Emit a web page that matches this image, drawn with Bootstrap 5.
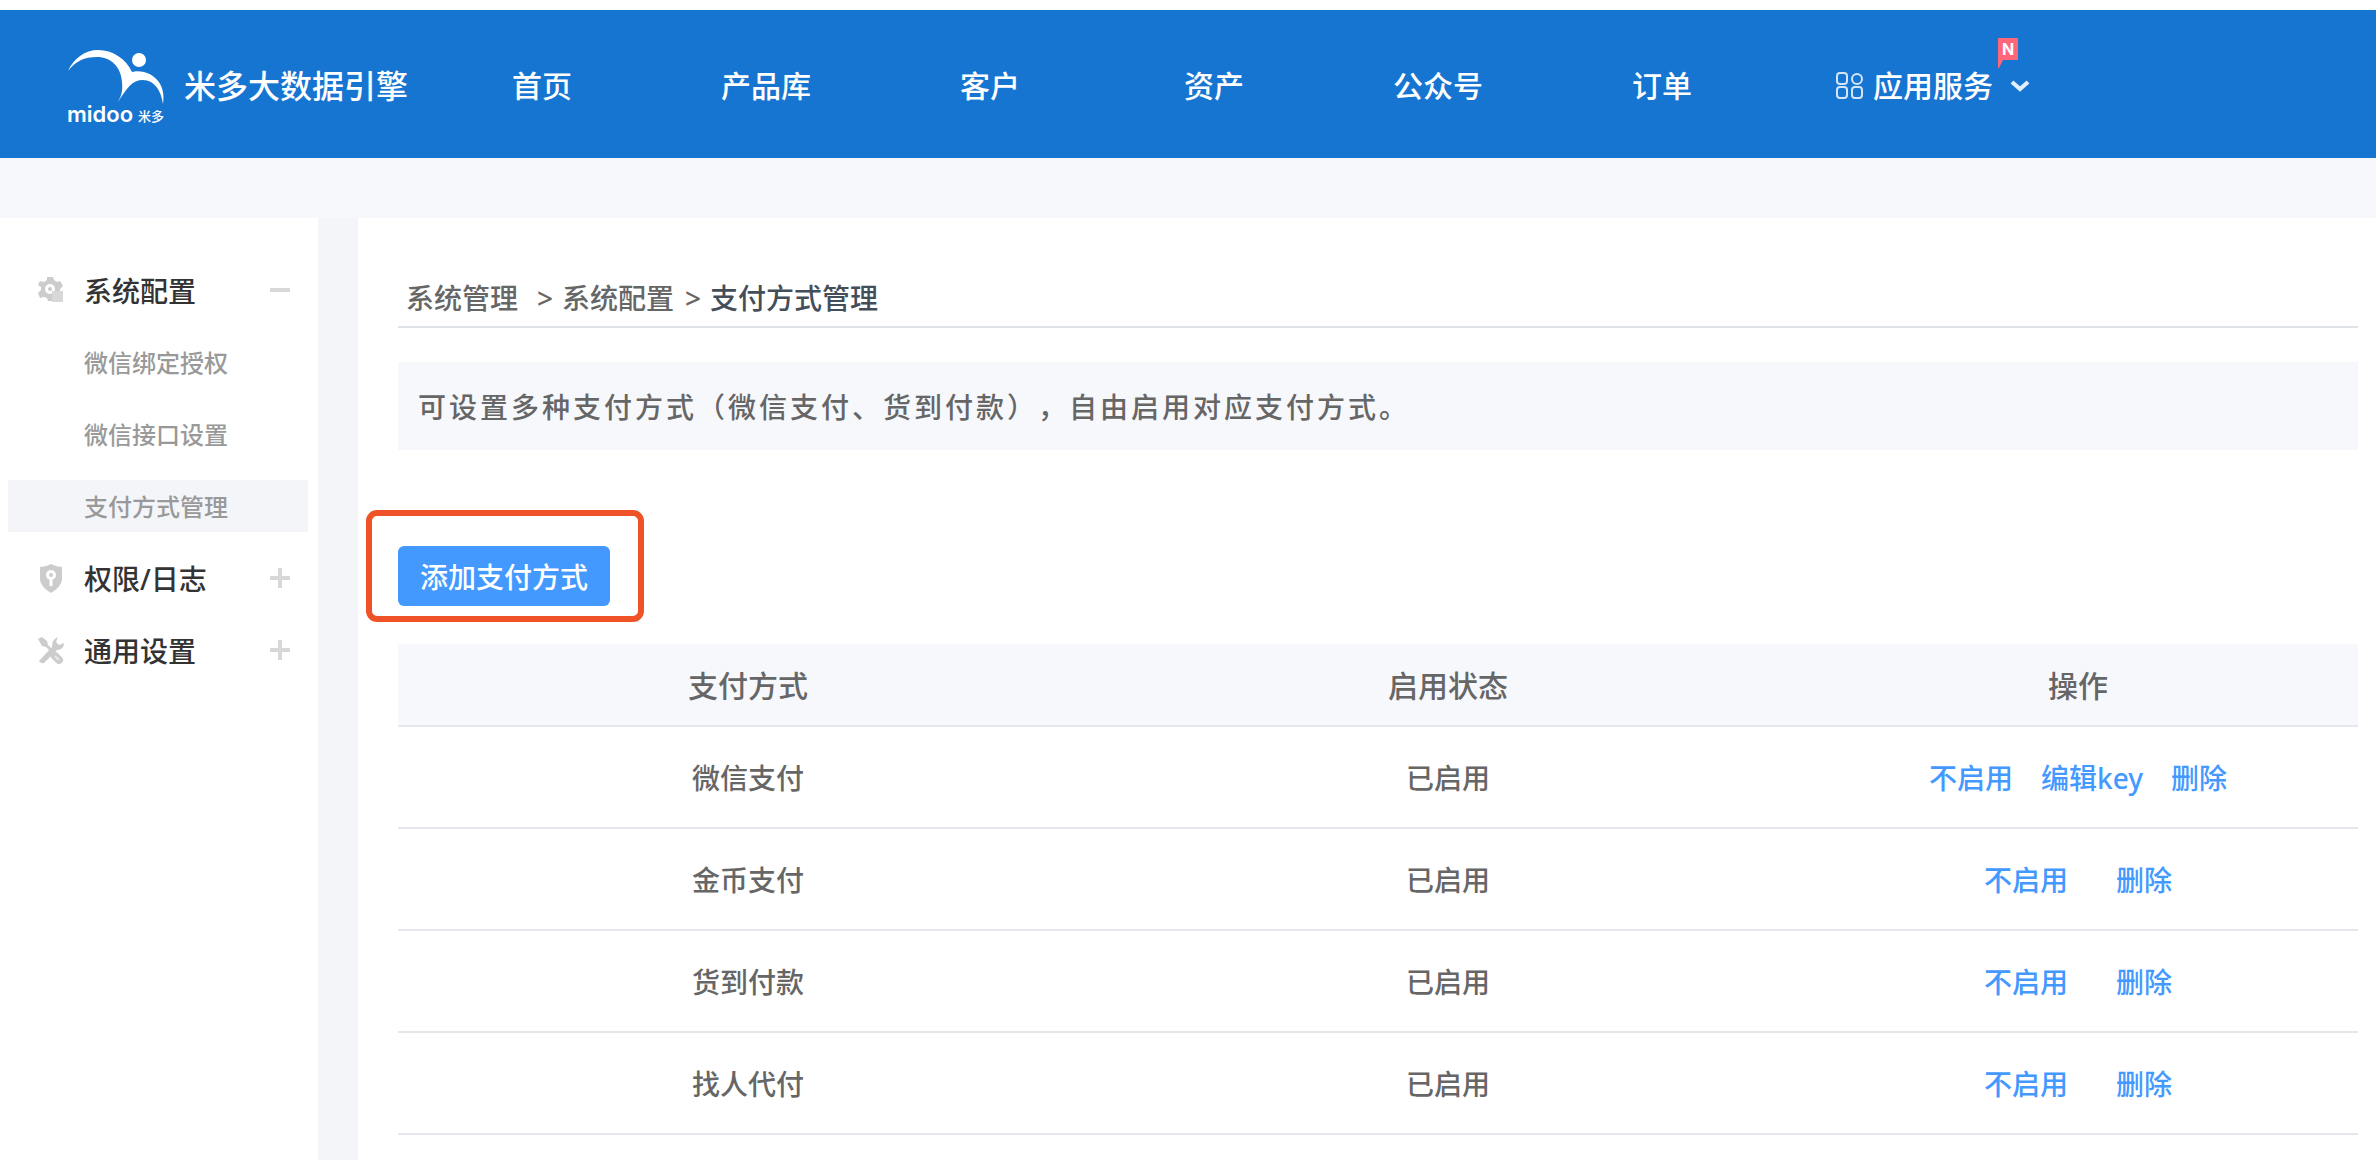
<!DOCTYPE html>
<html lang="zh-CN">
<head>
<meta charset="utf-8">
<meta name="viewport" content="width=device-width, initial-scale=1">
<title>支付方式管理</title>
<link href="https://cdn.jsdelivr.net/npm/bootstrap@5.3.0/dist/css/bootstrap.min.css" rel="stylesheet">
<style>
  body { font-family: "Noto Sans", "Noto Sans CJK SC", sans-serif; font-size: 28px; font-weight: 500; line-height: 40px; color: #666; background: #f6f8fc; }
  a { text-decoration: none; }
  .topbar { background: #1775d2; border-top: 10px solid #fff; height: 158px; }
  .brand-box { width: 430px; padding-left: 66px; gap: 18px; color: #fff; font-size: 32px; }
  .brand-box span { padding-top: 4px; }
  .brand-box svg text { font-family: Inter, "Noto Sans CJK SC", sans-serif; }
  .main-nav .nav-link { width: 224px; padding: 4px 0 0; text-align: center; color: #fff; font-size: 30px; line-height: 40px; }
  .main-nav .nav-link.services { width: auto; padding-left: 62px; gap: 9px; }
  .new-flag { position: absolute; left: 100%; top: -28px; margin-left: 5px; }
  .new-flag text { font-family: Inter, sans-serif; font-size: 16px; font-weight: 700; }
  .page-body { margin-top: 60px; }
  .side-panel { width: 318px; padding: 46px 10px 0 8px; gap: 20px; }
  .side-panel a { height: 52px; padding: 2px 18px 0 76px; color: #999; font-size: 24px; }
  .side-panel a.group-head { padding-left: 30px; color: #333; font-size: 28px; }
  .side-panel a.current { background: #f3f5f9; }
  .side-panel .group-icon { width: 26px; height: 30px; margin-right: 20px; }
  .side-panel .fold-icon { width: 20px; height: 20px; margin: 0 0 2px auto; }
  .gutter-strip { width: 40px; background: #f3f5f9; }
  .content-panel { padding: 60px 18px 0 40px; }
  .crumbs { padding: 0 8px 8px; border-bottom: 2px solid #dfe3e8; }
  .crumbs a { color: #666; }
  .crumbs .sep { margin: 0 9px 0 11px; }
  .crumbs .sep.first { margin-left: 19px; }
  .crumbs .here { color: #444e59; }
  .notice { margin-top: 34px; padding: 25px 20px 23px; background: #f6f8fc; letter-spacing: 3px; text-spacing-trim: space-all; }
  .toolbar-row { margin-top: 60px; }
  .highlight { margin-left: -32px; padding: 30px 28px 10px 26px; border: 6px solid #f05228; border-radius: 11px; }
  .btn-add { --bs-btn-color: #fff; --bs-btn-bg: #4499ff; --bs-btn-hover-color: #fff; --bs-btn-hover-bg: #2e8bf7; --bs-btn-font-weight: 500; height: 60px; padding: 2px 22px 0; border: 0; border-radius: 6px; font-size: 28px; line-height: 40px; }
  .pay-table { table-layout: fixed; margin-top: 22px; --bs-table-bg: transparent; color: #666; text-align: center; vertical-align: middle; }
  .pay-table th, .pay-table td { padding: 2px 0 0; border-bottom: 2px solid #e6e7ec; color: #666; vertical-align: middle; }
  .pay-table th { height: 82px; background: #f6f8fc; font-size: 30px; font-weight: 500; }
  .pay-table td { height: 102px; }
  .pay-table .wide-col { width: calc(100% * 5 / 14); }
  .pay-table a { color: #4499ff; }
  .acts { gap: 28px; }
  .acts.two { gap: 48px; }
</style>
<script src="https://cdn.jsdelivr.net/npm/bootstrap@5.3.0/dist/js/bootstrap.bundle.min.js"></script>
</head>
<body>
<header class="topbar d-flex align-items-center">
  <a class="brand-box d-flex align-items-center flex-shrink-0" href="#">
    <svg width="100" height="88" viewBox="-2 -10 100 88" fill="#fff" aria-label="midoo">
      <path d="M0 21C6 8 17 0 30 0c15 0 28 9 34 22 3-1 8-1 12 0 12 3 22 14 19 32-2-14-9-24-20-24-11 0-16 8-25 22 3-6 5-10 4-20C53 17 43 7 29 7 16 7 8 11 0 21z"/>
      <circle cx="71" cy="10" r="7"/>
      <text x="-1" y="72" font-size="22" font-weight="600">midoo</text>
      <text x="70" y="71" font-size="13">米多</text>
    </svg>
    <span>米多大数据引擎</span>
  </a>
  <nav class="main-nav nav flex-nowrap align-items-center">
    <a class="nav-link" href="#">首页</a>
    <a class="nav-link" href="#">产品库</a>
    <a class="nav-link" href="#">客户</a>
    <a class="nav-link" href="#">资产</a>
    <a class="nav-link" href="#">公众号</a>
    <a class="nav-link" href="#">订单</a>
    <a class="nav-link services d-flex align-items-center" href="#">
      <svg width="28" height="28" viewBox="0 0 28 28" fill="none" stroke="#d3e5f7" stroke-width="2">
        <rect x="1" y="1" width="10" height="11" rx="3"/><circle cx="21" cy="7" r="5"/>
        <rect x="1" y="15" width="10" height="11" rx="3"/><rect x="16" y="15" width="10" height="11" rx="3"/>
      </svg>
      <span class="position-relative">应用服务
        <svg class="new-flag" width="20" height="30" viewBox="0 0 20 30"><path fill="#ff6677" d="M0 0h20v22H5L1 30H0z"/><text x="10" y="17" text-anchor="middle" fill="#fff">N</text></svg>
      </span>
      <svg class="ms-2" width="20" height="14" viewBox="0 0 20 14" fill="none" stroke="#e3eefa" stroke-width="4"><path d="M2 3l8 7 8-7"/></svg>
    </a>
  </nav>
</header>
<div class="page-body d-flex bg-white">
  <nav class="side-panel d-flex flex-column flex-shrink-0">
    <a class="group-head d-flex align-items-center" href="#">
      <svg class="group-icon" viewBox="0 0 26 30"><path fill="#ccc" d="M9 1h6l1 3 3 2 3-1 3 5-3 3v2H14v10h-4l-1-3-3-1-4 1-2-5 3-3v-3L0 9l2-4 4 1 3-2z"/><circle cx="12" cy="13" r="5" fill="#fff"/><circle cx="12" cy="13" r="2" fill="#ccc"/><rect x="14" y="15" width="11" height="11" fill="#d8d8d8"/></svg>
      系统配置
      <svg class="fold-icon" viewBox="0 0 20 20"><path d="M0 10h20" stroke="#d8d8d8" stroke-width="4"/></svg>
    </a>
    <a class="d-flex align-items-center" href="#">微信绑定授权</a>
    <a class="d-flex align-items-center" href="#">微信接口设置</a>
    <a class="current d-flex align-items-center" href="#" aria-current="page">支付方式管理</a>
    <a class="group-head d-flex align-items-center" href="#">
      <svg class="group-icon" viewBox="0 0 26 30"><path fill="#ccc" d="M13 0q5 3 11 3v13q-1 7-11 13Q3 23 2 16V3q6 0 11-3z"/><circle cx="13" cy="11" r="5" fill="#fff"/><circle cx="13" cy="11" r="2" fill="#ccc"/><path d="M13 14v8" stroke="#fff" stroke-width="3"/></svg>
      权限/日志
      <svg class="fold-icon" viewBox="0 0 20 20"><path d="M0 10h20M10 0v20" stroke="#d8d8d8" stroke-width="4"/></svg>
    </a>
    <a class="group-head d-flex align-items-center" href="#">
      <svg class="group-icon" viewBox="0 0 26 30"><path fill="#ccc" d="M0 3l4-2 5 4 1 4 4 4-2 2-4-4-4-1zM20 1l-2 5 3 3 5-2q0 7-7 7L6 27q-3 1-5-2L14 11q0-8 6-10z"/><path d="M17 20l4 4" stroke="#ccc" stroke-width="8" stroke-linecap="round"/><path d="M17 20l4 4" stroke="#e8e8e8" stroke-width="2"/></svg>
      通用设置
      <svg class="fold-icon" viewBox="0 0 20 20"><path d="M0 10h20M10 0v20" stroke="#d8d8d8" stroke-width="4"/></svg>
    </a>
  </nav>
  <div class="gutter-strip flex-shrink-0"></div>
  <main class="content-panel flex-grow-1">
    <nav class="crumbs d-flex" aria-label="breadcrumb">
      <a href="#">系统管理</a><span class="sep first">&gt;</span><a href="#">系统配置</a><span class="sep">&gt;</span><span class="here">支付方式管理</span>
    </nav>
    <div class="notice">可设置多种支付方式（微信支付、货到付款），自由启用对应支付方式。</div>
    <div class="toolbar-row d-flex">
      <div class="highlight"><button class="btn btn-add d-block" type="button">添加支付方式</button></div>
    </div>
    <table class="table pay-table mb-5">
      <thead>
        <tr><th class="wide-col" scope="col">支付方式</th><th class="wide-col" scope="col">启用状态</th><th scope="col">操作</th></tr>
      </thead>
      <tbody>
        <tr><td>微信支付</td><td>已启用</td><td><div class="acts d-flex justify-content-center"><a href="#">不启用</a><a href="#">编辑key</a><a href="#">删除</a></div></td></tr>
        <tr><td>金币支付</td><td>已启用</td><td><div class="acts two d-flex justify-content-center"><a href="#">不启用</a><a href="#">删除</a></div></td></tr>
        <tr><td>货到付款</td><td>已启用</td><td><div class="acts two d-flex justify-content-center"><a href="#">不启用</a><a href="#">删除</a></div></td></tr>
        <tr><td>找人代付</td><td>已启用</td><td><div class="acts two d-flex justify-content-center"><a href="#">不启用</a><a href="#">删除</a></div></td></tr>
      </tbody>
    </table>
  </main>
</div>
</body>
</html>
